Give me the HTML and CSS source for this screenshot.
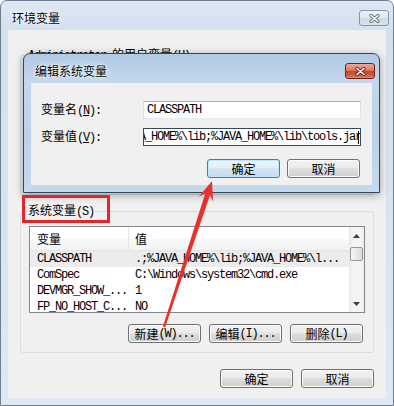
FILE: index.html
```html
<!DOCTYPE html>
<html>
<head>
<meta charset="utf-8">
<title>环境变量</title>
<link rel="stylesheet" href="styles.css">
</head>
<body>
<div class="window main">
  <div class="titlebar">
    <span class="caption">环境变量</span>
    <span class="close"><svg width="11" height="9" viewBox="0 0 11 9"><path class="x-edge" d="M2 1.5 9 7.5M9 1.5 2 7.5"/><path class="x-core" d="M2 1.5 9 7.5M9 1.5 2 7.5"/></svg></span>
  </div>
  <div class="client">
    <fieldset class="group user">
      <legend><span class="lat">Administrator </span>的用户变量<span class="lat">(U)</span></legend>
    </fieldset>
    <fieldset class="group">
      <legend>系统变量<span class="lat">(S)</span></legend>
      <div class="list">
        <div class="rows">
          <div class="row head"><span class="name">变量</span><span class="value">值</span></div>
          <div class="row sel lat"><span class="name">CLASSPATH</span><span class="value">.;%JAVA_HOME%\lib;%JAVA_HOME%\l...</span></div>
          <div class="row lat"><span class="name">ComSpec</span><span class="value">C:\Windows\system32\cmd.exe</span></div>
          <div class="row lat"><span class="name">DEVMGR_SHOW_...</span><span class="value">1</span></div>
          <div class="row lat"><span class="name">FP_NO_HOST_C...</span><span class="value">NO</span></div>
        </div>
        <div class="vscroll">
          <span class="arrow"><svg width="7" height="4" viewBox="0 0 7 4"><polygon points="0,4 3.5,0 7,4"/></svg></span>
          <span class="thumb"></span>
          <span class="track"></span>
          <span class="arrow"><svg width="7" height="4" viewBox="0 0 7 4"><polygon points="0,0 7,0 3.5,4"/></svg></span>
        </div>
      </div>
      <div class="actions">
        <button class="btn">新建<span class="lat">(W)...</span></button>
        <button class="btn">编辑<span class="lat">(I)...</span></button>
        <button class="btn">删除<span class="lat">(L)</span></button>
      </div>
    </fieldset>
    <div class="actions footer">
      <button class="btn">确定</button>
      <button class="btn">取消</button>
    </div>
  </div>

  <div class="window dialog">
    <div class="titlebar">
      <span class="caption">编辑系统变量</span>
      <span class="close red"><svg width="11" height="9" viewBox="0 0 11 9"><path class="x-edge" d="M2 1.5 9 7.5M9 1.5 2 7.5"/><path class="x-core" d="M2 1.5 9 7.5M9 1.5 2 7.5"/></svg></span>
    </div>
    <div class="client form">
      <label class="label">变量名<span class="lat">(<u>N</u>):</span></label>
      <div class="field lat">CLASSPATH</div>
      <label class="label">变量值<span class="lat">(<u>V</u>):</span></label>
      <div class="field focus lat"><span class="text">.;%JAVA_HOME%\lib;%JAVA_HOME%\lib\tools.jar</span><span class="caret"></span></div>
      <div class="actions">
        <button class="btn default">确定</button>
        <button class="btn">取消</button>
      </div>
    </div>
  </div>
</div>

<!-- red annotation drawn over the screenshot -->
<svg class="marks" width="394" height="406" viewBox="0 0 394 406">
  <rect x="23.5" y="196.5" width="85" height="25" fill="none" stroke="#e3262a" stroke-width="3"/>
  <polygon fill="#e8312f" points="165.1,327.4 210,195.1 213.1,201.4 212,181 198.9,196.6 205.2,193.5 162.9,326.6"/>
</svg>
</body>
</html>
```

FILE: styles.css
```css
html, body {
  margin: 0;
  width: 394px;
  height: 406px;
  overflow: hidden;
  background: #fff;
}
* {
  box-sizing: border-box;
}
body {
  font-family: "Noto Sans CJK SC", "Noto Sans", sans-serif;
  font-size: 12px;
  line-height: 14px;
  color: #000;
}
.lat {
  font-family: "Liberation Mono", "DejaVu Sans Mono", monospace;
  letter-spacing: -1.2px;
}

/* window frames */
.window {
  display: flex;
  flex-direction: column;
  border: 1px solid #56667a;
  border-radius: 7px 7px 0 0;
  padding: 0 7px 7px;
}
.main {
  position: relative;
  width: 394px;
  height: 406px;
  border-color: #6e7d8f;
  background: linear-gradient(#dee8f4, #d3e0ee 29px, #d8e4f0 60%, #dfe8f2);
}
.dialog {
  position: absolute;
  left: 22px;
  top: 52px;
  width: 357px;
  height: 140px;
  border-color: #34475e;
  background: linear-gradient(#b1c9e4, #c3d7ec 29px, #bcd2ea 60%, #c6daee);
  box-shadow: 0 2px 8px rgba(0, 0, 0, .35);
}
.titlebar {
  flex-shrink: 0;
  height: 29px;
  display: flex;
  justify-content: space-between;
  align-items: flex-start;
}
.caption {
  margin: 10px 0 0 4px;
  text-shadow: 0 0 6px #fff, 0 0 3px #fff, 0 0 1px #fff;
}
.close {
  width: 30px;
  height: 16px;
  margin: 9px -3px 0 0;
  display: flex;
  align-items: center;
  justify-content: center;
  border: 1px solid #8593a6;
  border-radius: 3px;
  background: linear-gradient(#eef3f8, #dde6f0 48%, #cfdae7 52%, #d8e2ed);
}
.close svg {
  fill: none;
  stroke-linecap: round;
}
.x-edge {
  stroke: #58657a;
  stroke-width: 3.2;
}
.x-core {
  stroke: #fff;
  stroke-width: 1.6;
}
.close.red {
  border-color: #6b2318;
  background: linear-gradient(#eaa99b, #dc7864 45%, #c8442b 52%, #d15a3f 80%, #de8a70);
}
.close.red .x-edge {
  stroke: #6a1d12;
}
.client {
  flex: 1;
  background: #f0f0f0;
}

/* environment variables window */
.main > .client {
  display: flex;
  flex-direction: column;
  padding: 17px 12px 0;
}
.group {
  margin: 0;
  padding: 7px 8px 9px;
  border: 1px solid #d5dfe5;
  border-radius: 3px;
}
.group legend {
  padding: 0 1px;
  margin-left: -2px;
  line-height: 14px;
}
.group.user {
  height: 148px;
  margin-bottom: 8px;
}
.list {
  display: flex;
  height: 87px;
  border: 1px solid #828790;
  background: #fff;
}
.rows {
  flex: 1;
  overflow: hidden;
}
.row {
  display: flex;
  align-items: center;
  height: 16px;
  white-space: nowrap;
}
.row .name {
  width: 99px;
  padding-left: 7px;
  overflow: hidden;
}
.row .value {
  padding-left: 6px;
}
.row.head {
  height: 24px;
  border-bottom: 1px solid #e5e5e5;
  background: linear-gradient(#fff, #fff 50%, #f7f8f9 51%, #f2f3f4);
}
.row.head .name {
  height: 100%;
  display: flex;
  align-items: center;
  border-right: 1px solid #e3e5e8;
}
.row.sel {
  background: #ececec;
}
.vscroll {
  width: 15px;
  display: flex;
  flex-direction: column;
  background: linear-gradient(90deg, #e6e6e6, #f3f3f3 20%, #f5f5f5 80%, #ebebeb);
}
.arrow {
  height: 17px;
  display: flex;
  align-items: center;
  justify-content: center;
}
.arrow svg {
  fill: #3c3c3c;
}
.thumb {
  height: 14px;
  margin: 3px 1px 0;
  border: 1px solid #979797;
  border-radius: 2px;
  background: linear-gradient(90deg, #f4f4f4, #e9e9e9 50%, #dcdcdc);
}
.track {
  flex: 1;
}
.actions {
  display: flex;
  justify-content: flex-end;
  gap: 8px;
  margin-top: 11px;
  padding-right: 2px;
}
.actions.footer {
  margin-top: 16px;
  padding-right: 0;
}
.btn {
  width: 73px;
  height: 19px;
  padding: 0;
  display: flex;
  align-items: center;
  justify-content: center;
  font: inherit;
  color: #000;
  border: 1px solid #707070;
  border-radius: 3px;
  background: linear-gradient(#f2f2f2, #ebebeb 45%, #dddddd 52%, #cfcfcf);
  box-shadow: inset 0 0 0 1px #fbfbfb;
}
.btn.default {
  border-color: #3c7fb1;
  background: linear-gradient(#eef6fb, #e2eef7 45%, #cfe4f3 52%, #c2dcee);
  box-shadow: inset 0 0 0 1px #c4e6fa;
}

/* edit dialog */
.form {
  display: grid;
  grid-template-columns: 102px 218px;
  row-gap: 9px;
  align-items: center;
  align-content: start;
  padding: 18px 11px 7px 10px;
}
.field {
  height: 18px;
  display: flex;
  align-items: center;
  padding: 0 3px;
  overflow: hidden;
  white-space: nowrap;
  background: #fff;
  border: 1px solid;
  border-color: #abadb3 #e2e3ea #e3e9ef #dbdfe6;
}
.field.focus {
  justify-content: flex-end;
  padding-right: 1px;
  border-color: #334a62;
}
.field .text {
  flex-shrink: 0;
}
.caret {
  flex-shrink: 0;
  width: 1px;
  height: 13px;
  margin-left: -3px;
  background: #000;
}
.form .actions {
  grid-column: 1 / -1;
  margin-top: 4px;
  gap: 7px;
  padding-right: 0;
  margin-right: 1px;
}

/* annotation layer */
.marks {
  position: absolute;
  left: 0;
  top: 0;
  pointer-events: none;
}
```
